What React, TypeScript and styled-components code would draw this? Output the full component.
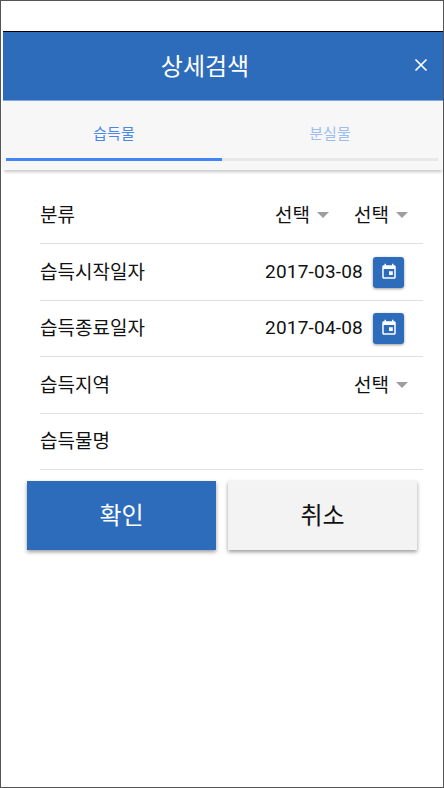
import React from "react";
import styled, { createGlobalStyle } from "styled-components";

const Global = createGlobalStyle`
  html, body { margin: 0; padding: 0; background: #fff; }
  * { box-sizing: border-box; }
  body { font-family: Roboto, "Noto Sans CJK KR", sans-serif; }
`;

const Frame = styled.div`
  width: 444px;
  height: 788px;
  border: 1px solid #555;
  padding: 30px 0 0 2px;
  background: #fff;
  overflow: hidden;
`;

const Header = styled.header`
  position: relative;
  height: 70px;
  background: #2d6cbb;
  border-top: 1px solid #000;
  border-bottom: 1px solid #7fa8d8;
  display: flex;
  align-items: center;
  justify-content: center;
  color: #fff;
  font-size: 24px;
  padding: 0 36px 4px 0;
`;

const Close = styled.button`
  position: absolute;
  right: 14px;
  top: 25px;
  width: 16px;
  height: 16px;
  padding: 0;
  border: 0;
  background: none;
  display: flex;
`;

const TabBar = styled.nav`
  height: 69px;
  background: #f7f7f7;
  box-shadow: 0 3px 3px -1px rgba(0, 0, 0, 0.22);
  padding: 0 3px;
  display: flex;
  flex-direction: column;
`;

const TabLabels = styled.div`
  display: grid;
  grid-template-columns: 216px 216px;
  height: 57px;
`;

const Tab = styled.div<{ $active?: boolean }>`
  display: flex;
  align-items: center;
  justify-content: center;
  padding-top: 5px;
  font-size: 15px;
  color: ${(p) => (p.$active ? "#4a86e8" : "#9dbdf0")};
`;

const Track = styled.div`
  width: 432px;
  height: 3px;
  background: #e8e8e8;
`;

const Indicator = styled.div`
  width: 216px;
  height: 3px;
  background: #4285f4;
`;

const Form = styled.section`
  padding: 17px 20px 0 37px;
`;

const Row = styled.div<{ $h: number }>`
  height: ${(p) => p.$h}px;
  border-bottom: 1px solid #e0e0e0;
  display: flex;
  align-items: center;
  justify-content: space-between;
  font-size: 19px;
  color: #111;
`;

const Label = styled.span`
  margin-bottom: 4px;
`;

const Controls = styled.div`
  display: flex;
  align-items: center;
`;

const Select = styled.div`
  display: flex;
  align-items: center;
  gap: 8px;
  margin-left: 10px;
  margin-right: 15px;
  padding-bottom: 4px;
`;

const Caret = styled.span`
  width: 0;
  height: 0;
  border-left: 6.500px solid transparent;
  border-right: 6.500px solid transparent;
  border-top: 6px solid #9e9e9e;
  margin-top: 3px;
  margin-left: -1px;
`;

const DateText = styled.span`
  font-size: 19px;
  letter-spacing: 0.2px;
  margin-bottom: 2px;
`;

const CalButton = styled.button`
  width: 31px;
  height: 31px;
  margin: 0 19px 0 10px;
  padding: 0 0 1px;
  border: 0;
  border-radius: 3px;
  background: #2d6cbb;
  box-shadow: 0 1px 3px rgba(0, 0, 0, 0.4);
  display: flex;
  align-items: center;
  justify-content: center;
`;

const Actions = styled.div`
  display: grid;
  grid-template-columns: 189px 189px;
  gap: 12px;
  padding: 11px 0 0 24px;
`;

const Action = styled.button<{ $primary?: boolean }>`
  height: 69px;
  border: 0;
  padding: 0 0 4px;
  font-family: inherit;
  font-size: 24px;
  background: ${(p) => (p.$primary ? "#2d6cbb" : "#f3f3f3")};
  color: ${(p) => (p.$primary ? "#fff" : "#111")};
  box-shadow: 0 2px 4px rgba(0, 0, 0, 0.4);
`;

const CalendarIcon = () => (
  <svg width="18" height="18" viewBox="0 0 24 24" fill="#fff">
    <path d="M19 3h-1V1h-2v2H8V1H6v2H5c-1.100 0-2 .9-2 2v14c0 1.100.9 2 2 2h14c1.100 0 2-.9 2-2V5c0-1.100-.9-2-2-2zm0 16H5V8h14v11zM12 11h5v5h-5z" />
  </svg>
);

const CloseIcon = () => (
  <svg width="16" height="16" viewBox="0 0 16 16" fill="none" stroke="#fff" strokeWidth="1.7">
    <path d="M2.500 2.500 13.500 13.500M13.500 2.500 2.500 13.500" />
  </svg>
);

const Choice = () => (
  <Select>
    선택
    <Caret />
  </Select>
);

export default function App() {
  return (
    <Frame>
      <Global />
      <Header>
        상세검색
        <Close aria-label="닫기">
          <CloseIcon />
        </Close>
      </Header>
      <TabBar>
        <TabLabels>
          <Tab $active>습득물</Tab>
          <Tab>분실물</Tab>
        </TabLabels>
        <Track>
          <Indicator />
        </Track>
      </TabBar>
      <Form>
        <Row $h={57}>
          <Label>분류</Label>
          <Controls>
            <Choice />
            <Choice />
          </Controls>
        </Row>
        <Row $h={57}>
          <Label>습득시작일자</Label>
          <Controls>
            <DateText>2017-03-08</DateText>
            <CalButton aria-label="달력">
              <CalendarIcon />
            </CalButton>
          </Controls>
        </Row>
        <Row $h={56}>
          <Label>습득종료일자</Label>
          <Controls>
            <DateText>2017-04-08</DateText>
            <CalButton aria-label="달력">
              <CalendarIcon />
            </CalButton>
          </Controls>
        </Row>
        <Row $h={57}>
          <Label>습득지역</Label>
          <Controls>
            <Choice />
          </Controls>
        </Row>
        <Row $h={56}>
          <Label>습득물명</Label>
        </Row>
      </Form>
      <Actions>
        <Action $primary>확인</Action>
        <Action>취소</Action>
      </Actions>
    </Frame>
  );
}
